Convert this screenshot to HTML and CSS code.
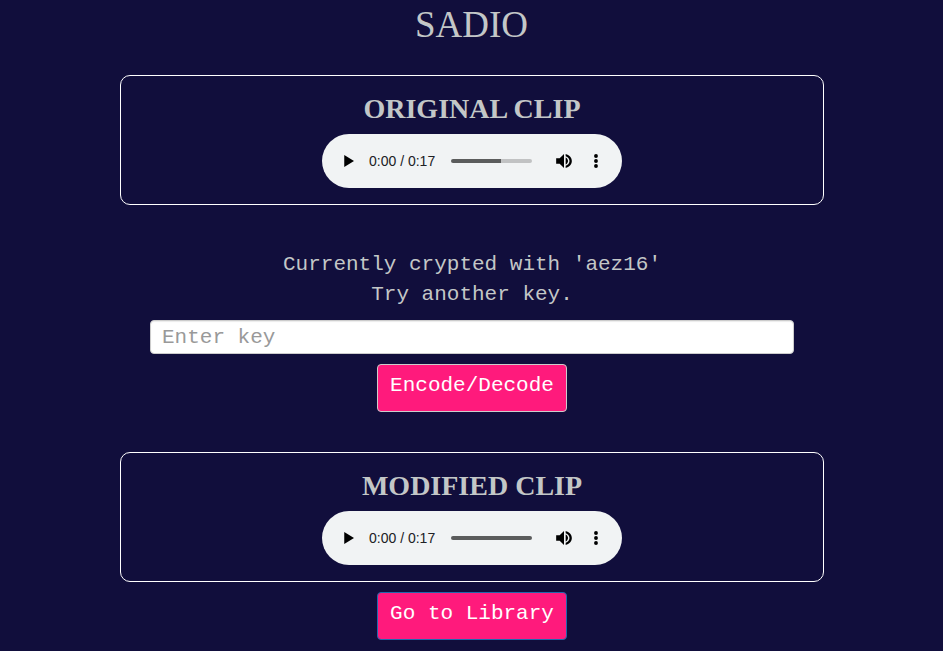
FILE: index.html
```html
<!DOCTYPE html>
<html lang="en">
<head>
<meta charset="utf-8">
<title>SADIO</title>
<link rel="stylesheet" href="styles.css">
</head>
<body>
<h1>SADIO</h1>
<main class="page">
  <section class="clip">
    <h2>ORIGINAL CLIP</h2>
    <div class="player">
      <button type="button" class="icon-button" aria-label="Play">
        <svg viewBox="0 0 24 24"><path d="M7.5 4.8v14.4L19.2 12z"/></svg>
      </button>
      <span class="time">0:00 / 0:17</span>
      <input type="range" class="seek seek-partial" min="0" max="17" value="0" aria-label="Seek">
      <button type="button" class="icon-button" aria-label="Mute">
        <svg viewBox="0 0 24 24"><path d="M2.6 8.6v6.8h4.2l5.2 5V3.6l-5.2 5H2.6zM16.8 12c0-1.8-1.1-3.4-2.8-4.2v8.4c1.7-.8 2.8-2.4 2.8-4.2zM14 3.6v2.6c2.6.8 4.6 3.1 4.6 5.8s-2 5-4.6 5.8v2.6c4.2-.9 7.4-4.3 7.4-8.4s-3.2-7.5-7.4-8.4z"/></svg>
      </button>
      <button type="button" class="icon-button" aria-label="More options">
        <svg viewBox="0 0 24 24"><circle cx="12" cy="6" r="2.3"/><circle cx="12" cy="12" r="2.3"/><circle cx="12" cy="18" r="2.3"/></svg>
      </button>
    </div>
  </section>
  <form class="key-form">
    <label for="key">Currently crypted with 'aez16'<br>Try another key.</label>
    <input type="text" id="key" class="key-input" placeholder="Enter key">
    <button type="button" class="action">Encode/Decode</button>
  </form>
  <section class="clip">
    <h2>MODIFIED CLIP</h2>
    <div class="player">
      <button type="button" class="icon-button" aria-label="Play">
        <svg viewBox="0 0 24 24"><path d="M7.5 4.8v14.4L19.2 12z"/></svg>
      </button>
      <span class="time">0:00 / 0:17</span>
      <input type="range" class="seek" min="0" max="17" value="0" aria-label="Seek">
      <button type="button" class="icon-button" aria-label="Mute">
        <svg viewBox="0 0 24 24"><path d="M2.6 8.6v6.8h4.2l5.2 5V3.6l-5.2 5H2.6zM16.8 12c0-1.8-1.1-3.4-2.8-4.2v8.4c1.7-.8 2.8-2.4 2.8-4.2zM14 3.6v2.6c2.6.8 4.6 3.1 4.6 5.8s-2 5-4.6 5.8v2.6c4.2-.9 7.4-4.3 7.4-8.4s-3.2-7.5-7.4-8.4z"/></svg>
      </button>
      <button type="button" class="icon-button" aria-label="More options">
        <svg viewBox="0 0 24 24"><circle cx="12" cy="6" r="2.3"/><circle cx="12" cy="12" r="2.3"/><circle cx="12" cy="18" r="2.3"/></svg>
      </button>
    </div>
  </section>
  <a href="#" class="action action-link">Go to Library</a>
</main>
</body>
</html>
```
FILE: styles.css
```css
* {
  box-sizing: border-box;
}

body {
  margin: 0;
  background: #110e3c;
  color: #c3c7c7;
  font: 21px/30px "Liberation Mono", "Courier New", monospace;
  text-align: center;
}

h1,
h2 {
  margin: 0;
  font-family: Georgia, "Liberation Serif", serif;
}

h1 {
  padding: 5px 0 30px;
  font-size: 37px;
  font-weight: 500;
  line-height: 40px;
}

.page {
  display: flex;
  flex-direction: column;
  align-items: center;
  padding: 0 119px 10px 120px;
}

.clip {
  display: flex;
  flex-direction: column;
  align-items: center;
  align-self: stretch;
  padding: 18px 15px 16px;
  border: 1px solid #fff;
  border-radius: 10px;
}

h2 {
  margin-bottom: 10px;
  font-size: 28px;
  font-weight: 700;
  line-height: 30px;
}

.player {
  display: flex;
  align-items: center;
  width: 300px;
  max-width: 100%;
  height: 54px;
  padding: 0 10px;
  border-radius: 27px;
  background: #f1f3f4;
}

.icon-button {
  display: flex;
  align-items: center;
  justify-content: center;
  flex: none;
  width: 32px;
  height: 32px;
  padding: 0;
  border: 0;
  background: none;
}

.icon-button svg {
  width: 20px;
  height: 20px;
  fill: #000;
}

.time {
  margin-left: 5px;
  color: #202124;
  font: 14px/20px "Liberation Sans", Arial, sans-serif;
  white-space: nowrap;
}

.seek {
  appearance: none;
  flex: 1;
  min-width: 0;
  height: 4px;
  margin: 0 16px;
  border-radius: 2px;
  background: #5b5c5c;
}

.seek-partial {
  background: linear-gradient(to right, #5b5c5c 62%, #c1c2c3 62%);
}

.seek::-webkit-slider-thumb {
  appearance: none;
  width: 0;
  height: 0;
}

.key-form {
  display: flex;
  flex-direction: column;
  align-items: center;
  align-self: stretch;
  padding: 45px 30px 40px;
}

.key-input {
  width: 100%;
  height: 34px;
  margin: 10px 0;
  padding: 0 11px;
  border: 1px solid #ccc;
  border-radius: 4px;
  background: #fff;
  box-shadow: inset 0 1px 1px rgba(0, 0, 0, 0.08);
  color: #555;
  font: inherit;
}

.key-input::placeholder {
  color: #999;
  opacity: 1;
}

.action {
  padding: 6px 12px 10px;
  border: 1px solid #ccc;
  border-radius: 4px;
  background: #ff1a7c;
  color: #fff;
  font: inherit;
  text-decoration: none;
  cursor: pointer;
}

.action-link {
  margin-top: 10px;
  border-color: #1f69ad;
}
```
